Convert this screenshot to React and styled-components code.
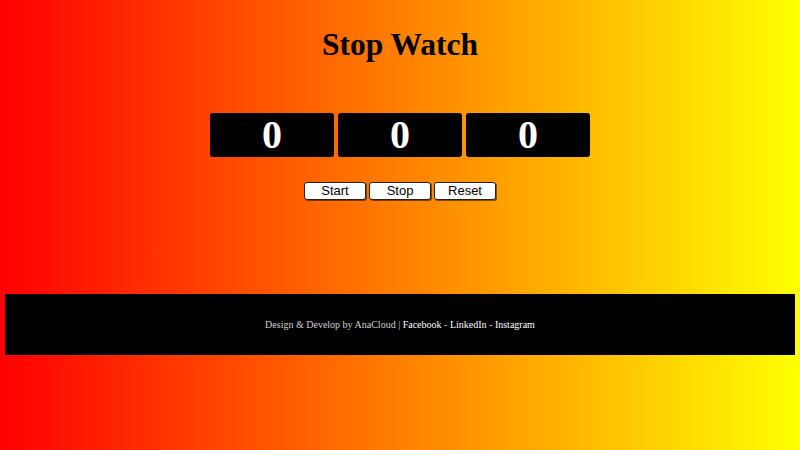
import React from "react";
import styled, { createGlobalStyle } from "styled-components";

const Global = createGlobalStyle`
  html, body { margin: 0; padding: 0; }
  body {
    width: 800px;
    height: 450px;
    overflow: hidden;
    background: linear-gradient(to right, #ff0000, #ffff00);
    font-family: "Liberation Serif", "Times New Roman", serif;
  }
`;

const Page = styled.div`
  display: flex;
  flex-direction: column;
  align-items: center;
  width: 800px;
  height: 450px;
`;

const Title = styled.h1`
  margin: 26px 0 0;
  font-size: 31.5px;
  line-height: 37px;
  font-weight: bold;
  color: #000;
`;

const Display = styled.div`
  display: flex;
  gap: 4px;
  margin-top: 50px;
`;

const Cell = styled.div`
  width: 124px;
  height: 44px;
  background: #000;
  border-radius: 3px;
  color: #fff;
  font-size: 40px;
  font-weight: bold;
  display: flex;
  align-items: center;
  justify-content: center;
  line-height: 1;
`;

const Controls = styled.div`
  display: flex;
  gap: 3px;
  margin-top: 25px;
`;

const Button = styled.button`
  width: 62px;
  height: 18px;
  padding: 0;
  background: #fff;
  border: 1px solid #222;
  border-radius: 3px;
  box-shadow: 1px 1px 0 rgba(0,0,0,0.5);
  font-family: "Liberation Sans", Arial, sans-serif;
  font-size: 13px;
  color: #000;
  line-height: 16px;
`;

const Footer = styled.footer`
  align-self: stretch;
  margin: 94px 5px 0;
  height: 61px;
  background: #000;
  display: flex;
  align-items: center;
  justify-content: center;
  font-size: 10px;
  color: #d0d0d0;
`;

const Link = styled.span`
  color: #fff;
`;

export default function App() {
  return (
    <>
      <Global />
      <Page>
        <Title>Stop Watch</Title>
        <Display>
          <Cell>0</Cell>
          <Cell>0</Cell>
          <Cell>0</Cell>
        </Display>
        <Controls>
          <Button>Start</Button>
          <Button>Stop</Button>
          <Button>Reset</Button>
        </Controls>
        <Footer>
          Design &amp; Develop by AnaCloud |&nbsp;<Link>Facebook</Link>&nbsp;-&nbsp;<Link>LinkedIn</Link>&nbsp;-&nbsp;<Link>Instagram</Link>
        </Footer>
      </Page>
    </>
  );
}
